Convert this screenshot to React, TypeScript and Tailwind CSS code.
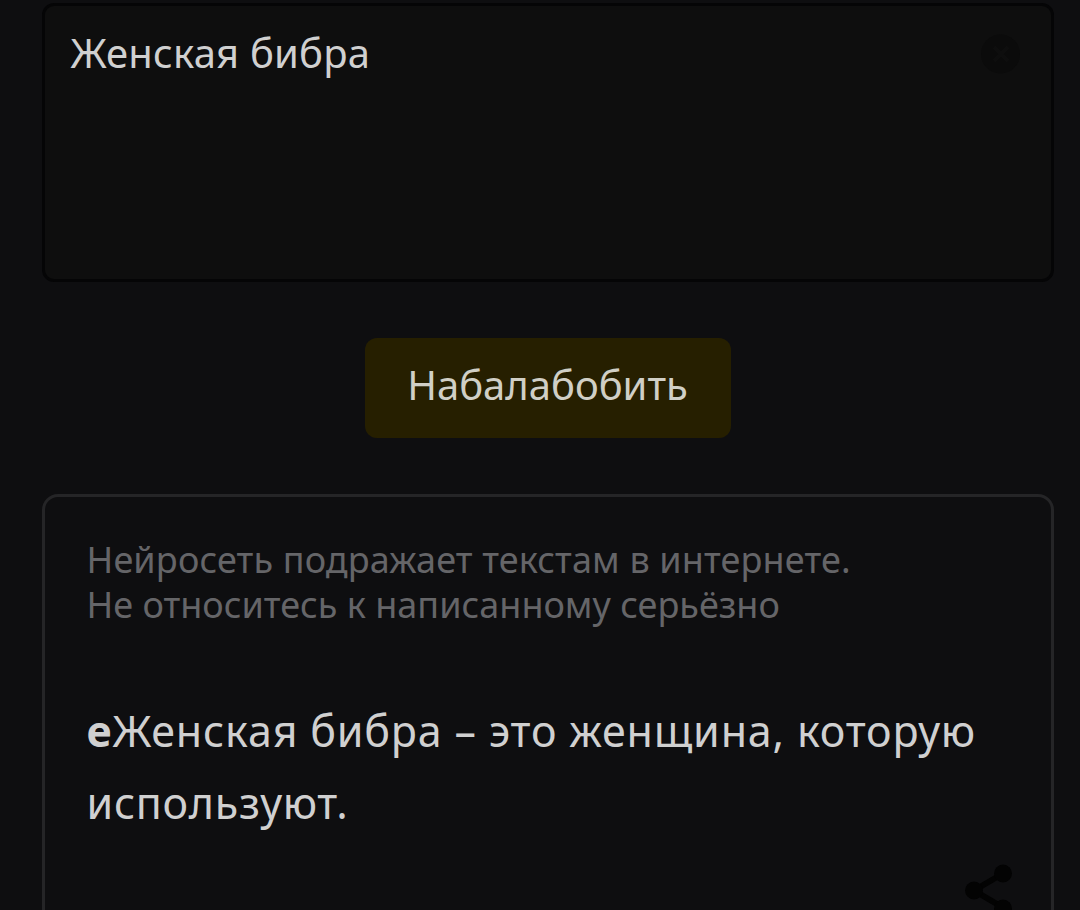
const ClearIcon = () => (
  <svg viewBox="0 0 40 40" className="size-10">
    <circle cx="19.5" cy="20" r="19.5" fill="#0b0b0b" />
    <path d="m13 13 14 14M27 13 13 27" stroke="#0e0e0e" strokeWidth="4" />
  </svg>
)

const ShareIcon = () => (
  <svg viewBox="0 0 50 60" className="h-[60px] w-[50px]" fill="#030303">
    <path d="M39 9.5 10 26.5l29 17" fill="none" stroke="#030303" strokeWidth="6" />
    <circle cx="39" cy="9.5" r="9" />
    <circle cx="10" cy="26.5" r="9" />
    <circle cx="39" cy="44.5" r="9" />
  </svg>
)

const App = () => {
  return (
    <main className="flex h-[910px] w-[1080px] flex-col items-center overflow-hidden bg-[#0e0e10] pt-[3px] pl-[15px] font-['Noto_Sans','Open_Sans',sans-serif] text-[#d0d0d0]">
      {/* Prompt input */}
      <section className="flex h-[279px] w-[1012px] shrink-0 justify-between rounded-xl border-3 border-[#050506] bg-[#0e0e0e] pt-[19px] pr-[30px] pl-[26px]">
        <p className="text-[40px] leading-[56px] tracking-[0.2px] whitespace-nowrap">Женская бибра</p>
        <button aria-label="Очистить" className="mt-[9px] size-10">
          <ClearIcon />
        </button>
      </section>

      <button className="mt-[56px] h-[100px] w-[366px] shrink-0 rounded-xl bg-[#261f00] pb-[6px] text-[40px] whitespace-nowrap text-[#d0cfc6]">
        Набалабобить
      </button>

      {/* Generated text */}
      <section className="mt-[56px] flex h-[520px] w-[1012px] shrink-0 flex-col rounded-2xl border-3 border-[#252527] px-[42px] pt-[40px]">
        <div className="text-[36px] leading-[45px] whitespace-nowrap text-[#656568]">
          <p className="tracking-[0.14px]">Нейросеть подражает текстам в интернете.</p>
          <p>Не относитесь к написанному серьёзно</p>
        </div>
        <div className="mt-[68px] text-[43px] leading-[72px] whitespace-nowrap">
          <p className="tracking-[0.83px]"><b>е</b>Женская бибра – это женщина, которую</p>
          <p className="tracking-[0.7px]">используют.</p>
        </div>
        <div className="mt-[25px] mr-[-5px] self-end">
          <ShareIcon />
        </div>
      </section>
    </main>
  )
}

export default App
